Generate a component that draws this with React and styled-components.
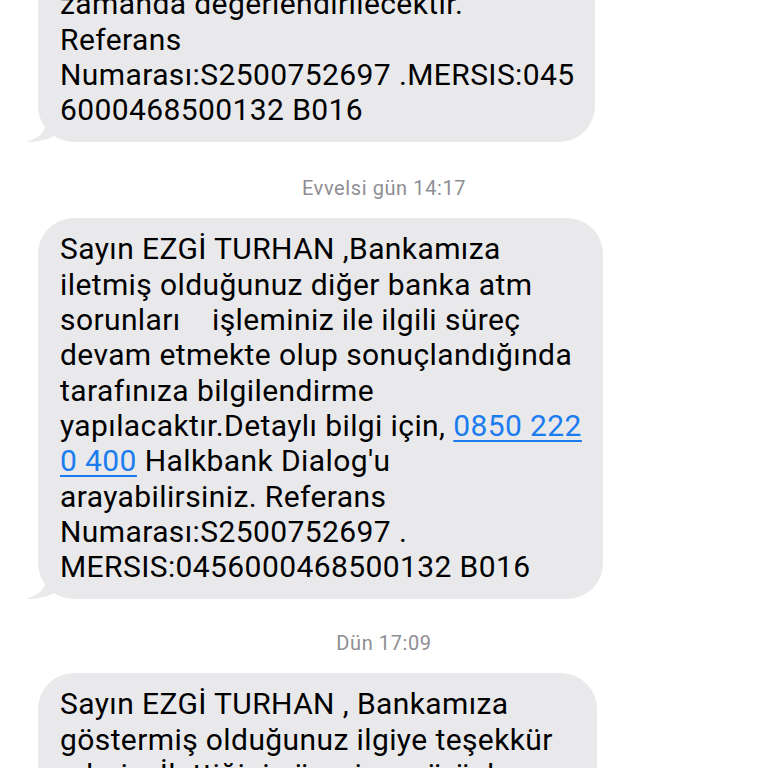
import React from 'react';
import styled, { createGlobalStyle } from 'styled-components';

const GlobalStyle = createGlobalStyle`
  html, body {
    margin: 0;
    padding: 0;
    background: #fff;
  }
  body {
    font-family: Roboto, "Liberation Sans", sans-serif;
    overflow: hidden;
  }
`;

const Screen = styled.div`
  width: 768px;
  height: 768px;
  overflow: hidden;
  background: #fff;
`;

const Thread = styled.div`
  display: flex;
  flex-direction: column;
  align-items: flex-start;
  margin-top: -62px;
  padding-left: 38px;
`;

const Bubble = styled.div`
  position: relative;
  box-sizing: border-box;
  width: ${(p) => p.width}px;
  background: #e9e9eb;
  border-radius: 36px;
  padding: 13px 20px 15px 22px;
  color: #000;
  font-size: 30px;
  letter-spacing: 0.4px;
  line-height: 35.3px;
`;

const Line = styled.div`
  white-space: pre;
`;

const Link = styled.span`
  color: #1b7cf0;
  text-decoration: underline;
  text-decoration-thickness: 2px;
  text-underline-offset: 4px;
`;

const Stamp = styled.div`
  align-self: stretch;
  margin-left: -38px;
  text-align: center;
  color: #8e8e93;
  font-size: 20px;
  letter-spacing: 0.6px;
  line-height: 22px;
  margin-top: ${(p) => p.top}px;
  margin-bottom: 19px;
`;

const TailSvg = styled.svg`
  position: absolute;
  left: -12px;
  bottom: 0;
`;

const Tail = () => (
  <TailSvg width="30" height="22" viewBox="0 0 30 22">
    <path d="M20 0 C20 10 16 17 0 22 C10 22 20 20 28 16 L28 0 Z" fill="#e9e9eb" />
  </TailSvg>
);

const App = () => (
  <Screen>
    <GlobalStyle />
    <Thread>
      <Bubble width={557}>
        <Line>uygun olarak en kısa</Line>
        <Line>zamanda değerlendirilecektir.</Line>
        <Line>Referans</Line>
        <Line>Numarası:S2500752697 .MERSIS:045</Line>
        <Line>6000468500132 B016</Line>
        <Tail />
      </Bubble>

      <Stamp top={35}>Evvelsi gün 14:17</Stamp>

      <Bubble width={565}>
        <Line>Sayın EZGİ TURHAN ,Bankamıza</Line>
        <Line>iletmiş olduğunuz diğer banka atm</Line>
        <Line>sorunları    işleminiz ile ilgili süreç</Line>
        <Line>devam etmekte olup sonuçlandığında</Line>
        <Line>tarafınıza bilgilendirme</Line>
        <Line>
          yapılacaktır.Detaylı bilgi için, <Link>0850 222</Link>
        </Line>
        <Line>
          <Link>0 400</Link> Halkbank Dialog'u
        </Line>
        <Line>arayabilirsiniz. Referans</Line>
        <Line>Numarası:S2500752697 .</Line>
        <Line>MERSIS:0456000468500132 B016</Line>
        <Tail />
      </Bubble>

      <Stamp top={33}>Dün 17:09</Stamp>

      <Bubble width={559}>
        <Line>Sayın EZGİ TURHAN , Bankamıza</Line>
        <Line>göstermiş olduğunuz ilgiye teşekkür</Line>
        <Line>ederiz. İlettiğiniz öneri ve görüşler</Line>
        <Line>değerlendirilecektir.</Line>
      </Bubble>
    </Thread>
  </Screen>
);

export default App;
